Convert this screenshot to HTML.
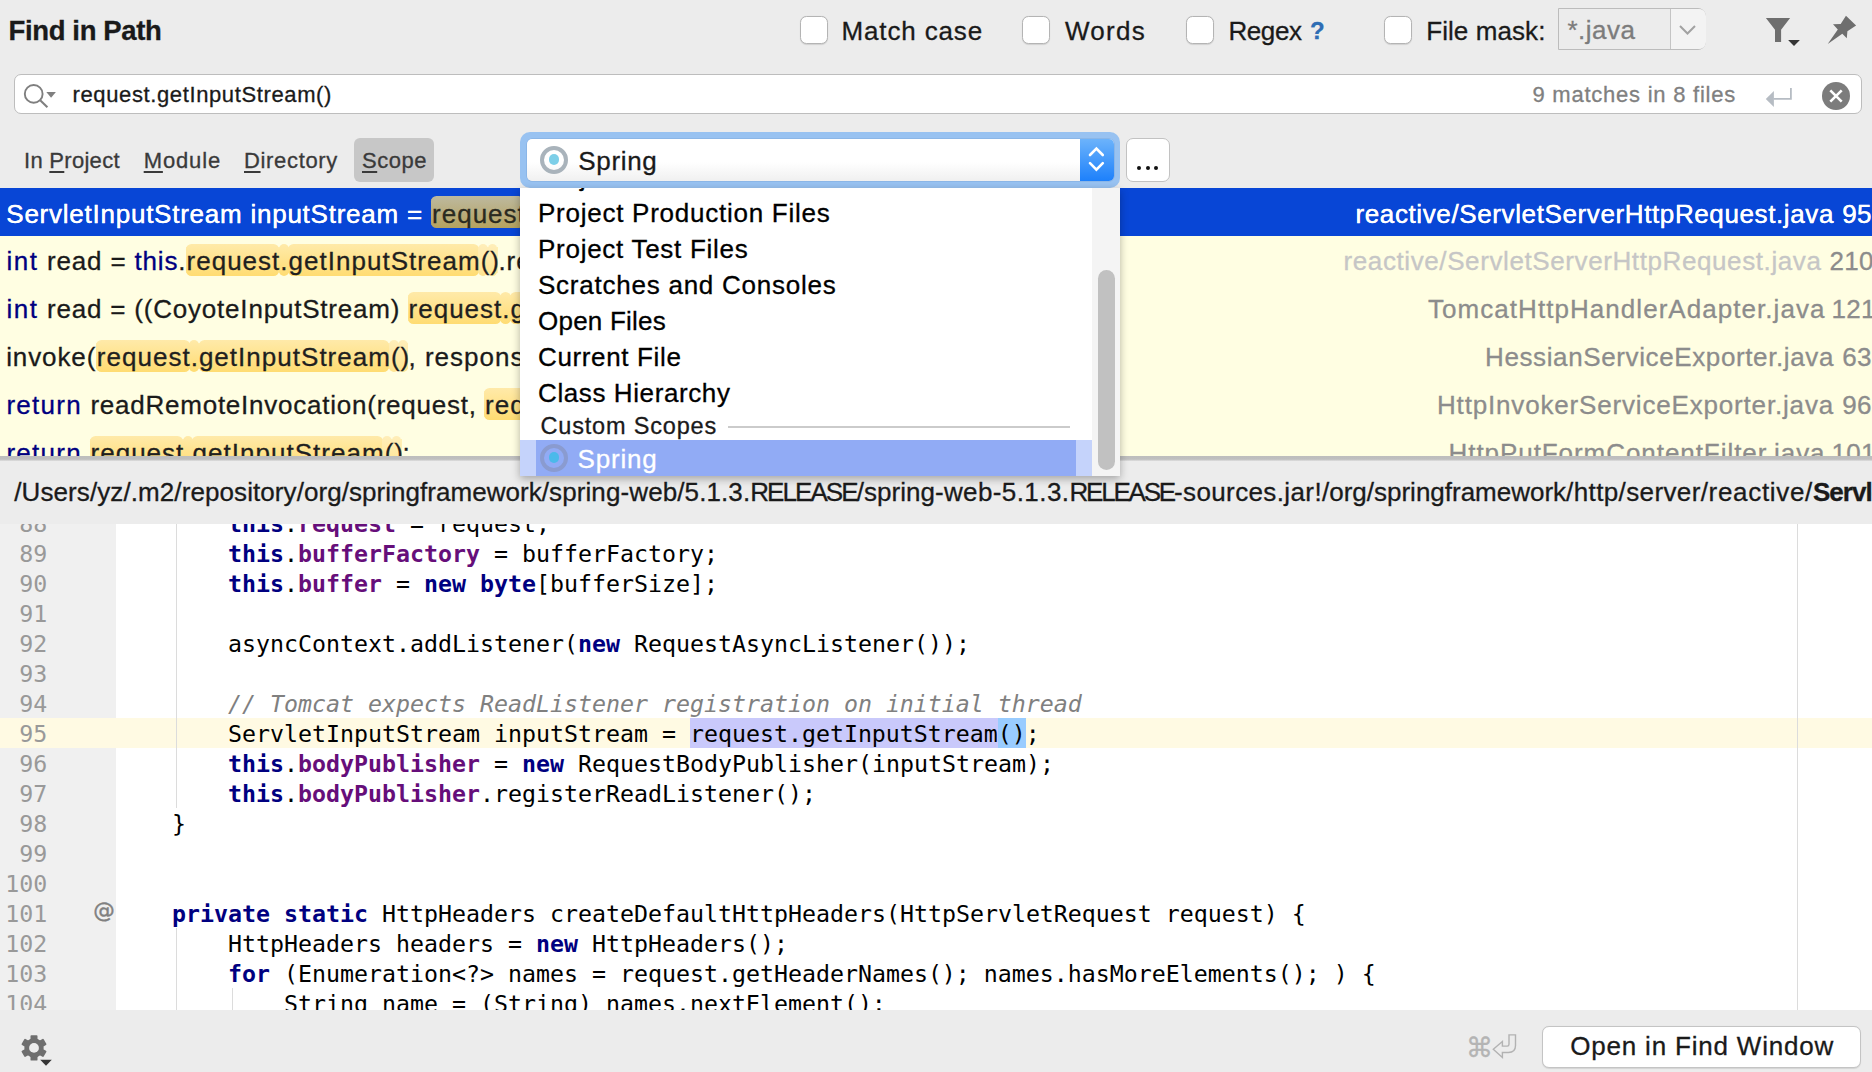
<!DOCTYPE html>
<html lang="en"><head><meta charset="utf-8"><title>Find in Path</title>
<style>
html,body{margin:0;padding:0}
body{width:1872px;height:1072px;background:#ececec;position:relative;overflow:hidden;font-family:"Liberation Sans",sans-serif;-webkit-font-smoothing:antialiased}
.t{position:absolute;white-space:pre;line-height:1;font-family:"Liberation Sans",sans-serif;-webkit-text-stroke:0.3px}
.t u{text-decoration:underline;text-decoration-thickness:1.6px;text-underline-offset:2.5px}
.abs{position:absolute}
.cb{position:absolute;width:26px;height:26px;border:1px solid #b4b4b4;border-radius:6.5px;background:#fff;box-shadow:0 0.5px 1px rgba(0,0,0,.12)}
.fm{position:absolute;left:1558px;top:7.5px;width:146px;height:40px;border:1px solid #bcbcbc;border-radius:0 8px 8px 0;background:#ececec}
.fmb{position:absolute;left:110.8px;top:0;width:35.2px;height:40px;border-left:1px solid #c4c4c4;background:#f3f3f3;border-radius:0 7px 7px 0}
.sf{position:absolute;left:14px;top:74px;width:1846px;height:38px;border:1px solid #bdbdbd;border-radius:7px;background:#fff}
.scopebtn{position:absolute;left:354px;top:138px;width:80px;height:44px;border-radius:6px;background:#c7c7c7}
.ring{position:absolute;left:520px;top:132px;width:600px;height:56px;border-radius:10px;background:#98c2f1;box-sizing:border-box}
.cbx{position:absolute;left:6.5px;top:6.5px;right:6px;height:42px;border-radius:5px;background:linear-gradient(#fff 55%,#f0f0f0);overflow:hidden;box-shadow:0 0 0 0.5px #7fa9dd}
.cbtn{position:absolute;right:0;top:0;width:34px;height:43px;background:linear-gradient(#6cb3fb,#1b7ffb)}
.cbtn svg{display:block}
.radio{position:absolute;width:28px;height:28px;border-radius:50%;box-sizing:border-box;border:4.4px solid #a9b3bb}
.radio i{position:absolute;left:4.7px;top:4.9px;width:10.2px;height:10.2px;border-radius:50%;background:#7dcfe8}
.radio.sel{border-color:#8a9bd0}
.radio.sel i{background:#4bb9ea}
.dots{position:absolute;left:1126px;top:138px;width:42px;height:42px;border:1px solid #c2c2c2;border-radius:7px;background:#fff}
.dots i{position:absolute;top:26.6px;width:4px;height:4px;border-radius:50%;background:#111}
.list{position:absolute;left:0;top:188px;width:1872px;height:268px;background:#fffee2;overflow:hidden}
.row{position:absolute;left:0;width:1872px;height:48px}
.row.sel{background:#0846d6}
.hl{position:absolute;border-radius:5.5px}
.clip6{position:absolute;left:0;top:428px;width:1872px;height:28px;overflow:hidden}
.listborder{position:absolute;left:0;top:456px;width:1872px;height:4.5px;background:linear-gradient(#bdbdbd 0,#bfbfbf 65%,#e0e0e0 100%)}
.popup{position:absolute;left:520px;top:188px;width:600px;height:288px;background:#fff;box-shadow:0 3px 8px rgba(0,0,0,.3)}
.psel{position:absolute;left:0;top:252px;width:572px;height:36px;background:#c5d3fb}
.pselin{position:absolute;left:16px;top:0;width:540px;height:36px;background:#91abf5}
.ptrack{position:absolute;left:572px;top:0;width:28px;height:288px;background:#f4f4f4}
.pthumb{position:absolute;left:6px;top:81.5px;width:16.5px;height:200px;border-radius:8.5px;background:#c1c1c1}
.psep{position:absolute;left:208px;top:238px;width:342px;height:1.6px;background:#cbcbcb}
.pclip{position:absolute;left:520px;top:188px;width:572px;height:288px;overflow:hidden}
.ed{position:absolute;left:0;top:524px;width:1872px;height:486px;background:#fff;overflow:hidden}
.gut{position:absolute;left:0;top:0;width:116px;height:488px;background:#f0f0f0}
.cur{position:absolute;left:0;top:194px;width:1872px;height:30px;background:#fffae3}
.margin{position:absolute;left:1796.5px;top:0;width:1.4px;height:488px;background:#dcdcdc}
.ig{position:absolute;width:1.3px;background:#dcdcdc}
.ln,.cl,.at{position:absolute;font-family:"DejaVu Sans Mono","Liberation Mono",monospace;font-size:23.254px;line-height:30px;height:30px;white-space:pre}
.ln{left:0;width:47.3px;text-align:right;color:#999}
.cl{left:116px;color:#000}
.at{left:93.3px;color:#808080;font-size:21.5px;font-family:'DejaVu Sans',sans-serif;-webkit-text-stroke:0.4px}
.k{color:#000080}
.f{color:#660e7a}
.c{color:#808080;font-weight:normal}
.esel{position:absolute;background:#c9c9fb;height:30px}
.br{position:absolute;background:#99ccff;height:30px}
.obtn{position:absolute;left:1542px;top:1026px;width:317.4px;height:40px;border:1px solid #c4c4c4;border-radius:7px;background:#fff;box-shadow:0 0.5px 1px rgba(0,0,0,.1)}
</style></head>
<body>
<span class="t" style="left:8.50px;top:17.32px;font-size:27.5px;color:#1a1a1a;font-weight:bold;letter-spacing:-0.363px;">Find in Path</span>
<div class="cb" style="left:800px;top:16px"></div>
<div class="cb" style="left:1022px;top:16px"></div>
<div class="cb" style="left:1186px;top:16px"></div>
<div class="cb" style="left:1384px;top:16px"></div>
<span class="t" style="left:841.50px;top:17.59px;font-size:26px;color:#1a1a1a;font-weight:normal;letter-spacing:0.855px;">Match case</span>
<span class="t" style="left:1065.00px;top:17.59px;font-size:26px;color:#1a1a1a;font-weight:normal;letter-spacing:1.269px;">Words</span>
<span class="t" style="left:1228.50px;top:17.59px;font-size:26px;color:#1a1a1a;font-weight:normal;letter-spacing:-0.431px;">Regex</span>
<span class="t" style="left:1310.00px;top:19.28px;font-size:24px;color:#2e6db4;font-weight:bold;letter-spacing:0.000px;">?</span>
<span class="t" style="left:1426.20px;top:17.59px;font-size:26px;color:#1a1a1a;font-weight:normal;letter-spacing:0.083px;">File mask:</span>
<div class="fm"><div class="fmb"></div></div>
<span class="t" style="left:1567.50px;top:17.09px;font-size:26px;color:#7c7c7c;font-weight:normal;letter-spacing:0.492px;">*.java</span>
<svg class="abs" style="left:1677px;top:22px" width="22" height="16" viewBox="0 0 22 16"><path d="M3 4 L10.5 11.5 L18 4" fill="none" stroke="#a2a2a2" stroke-width="2"/></svg>
<svg class="abs" style="left:1750px;top:0" width="122" height="60" viewBox="0 0 122 60"><path d="M15.90 18.10 L40.10 18.10 L31.10 29.70 L31.10 41.90 L25.00 41.90 L25.00 29.70 Z" fill="#6e6e6e"/><path d="M38.10 40.10 L49.90 40.10 L44.00 45.90 Z" fill="#353535"/><path d="M95.96 15.77 L106.10 25.50 L97.40 31.30 L96.80 38.30 L92.30 33.85 L77.70 44.10 L87.80 29.40 L83.00 24.20 L90.70 24.00 Z" fill="#6e6e6e"/></svg>
<div class="sf"></div>
<svg class="abs" style="left:20px;top:80px" width="40" height="30" viewBox="0 0 40 30"><circle cx="13.7" cy="13.9" r="8.9" fill="none" stroke="#7f7f7f" stroke-width="1.9"/><path d="M20.2 20.3 L27.4 27.2" stroke="#7f7f7f" stroke-width="2.1" fill="none"/><path d="M26.3 12 H35.9 L31.1 17.7 Z" fill="#7f7f7f"/></svg>
<span class="t" style="left:72.50px;top:83.98px;font-size:22px;color:#1a1a1a;font-weight:normal;letter-spacing:0.622px;">request.getInputStream()</span>
<span class="t" style="left:1532.50px;top:83.68px;font-size:22px;color:#808080;font-weight:normal;letter-spacing:0.759px;">9 matches in 8 files</span>
<svg class="abs" style="left:1762px;top:84px" width="36" height="28" viewBox="0 0 36 28"><path d="M28.9 4.1 V14.95 H11.5" fill="none" stroke="#b6bcc3" stroke-width="1.8"/><path d="M3.8 14.9 L11.9 6.9 V23.1 Z" fill="#b6bcc3"/></svg>
<svg class="abs" style="left:1821px;top:81px" width="30" height="30" viewBox="0 0 30 30"><circle cx="15" cy="15" r="14" fill="#7c7c7c"/><path d="M9.3 9.3 L20.7 20.7 M20.7 9.3 L9.3 20.7" stroke="#fff" stroke-width="2.6" fill="none"/></svg>
<div class="scopebtn"></div>
<span class="t" style="left:24.00px;top:149.98px;font-size:22px;color:#3a3a3a;font-weight:normal;letter-spacing:0.286px;">In <u>P</u>roject</span>
<span class="t" style="left:143.70px;top:149.98px;font-size:22px;color:#3a3a3a;font-weight:normal;letter-spacing:0.857px;"><u>M</u>odule</span>
<span class="t" style="left:244.00px;top:149.98px;font-size:22px;color:#3a3a3a;font-weight:normal;letter-spacing:0.665px;"><u>D</u>irectory</span>
<span class="t" style="left:362.00px;top:149.98px;font-size:22px;color:#3a3a3a;font-weight:normal;letter-spacing:0.522px;"><u>S</u>cope</span>
<div class="ring"><div class="cbx"><div class="cbtn"><svg width="34" height="43" viewBox="0 0 34 43"><path d="M10 16 L16.4 9.6 L22.8 16 M10 24.2 L16.4 30.6 L22.8 24.2" fill="none" stroke="#fff" stroke-width="2.6" stroke-linecap="round" stroke-linejoin="miter"/></svg></div></div></div>
<div class="radio" style="left:540px;top:145.5px"><i></i></div>
<span class="t" style="left:578.30px;top:148.39px;font-size:26px;color:#1a1a1a;font-weight:normal;letter-spacing:0.674px;">Spring</span>
<div class="dots"><i style="left:10.3px"></i><i style="left:18.5px"></i><i style="left:26.6px"></i></div>
<div class="list">
<div class="row sel" style="top:0"></div>
</div>
<div class="hl" style="left:430.5px;top:199px;width:313.5px;height:26px;background:rgba(180,170,120,.55);border-radius:0"></div><div class="hl" style="left:430.5px;top:196px;width:93.3px;height:32px;background:linear-gradient(#bdb99f,#b5a25e)"></div><div class="hl" style="left:523.2px;top:196px;width:10.3px;height:32px;background:linear-gradient(#bdb99f,#b5a25e)"></div><div class="hl" style="left:532.9px;top:196px;width:190.4px;height:32px;background:linear-gradient(#bdb99f,#b5a25e)"></div><div class="hl" style="left:722.7px;top:196px;width:10.0px;height:32px;background:linear-gradient(#bdb99f,#b5a25e)"></div><div class="hl" style="left:732.3px;top:196px;width:9.7px;height:32px;background:linear-gradient(#bdb99f,#b5a25e)"></div>
<span class="t" style="left:6.30px;top:200.79px;font-size:26px;color:#fff;font-weight:normal;letter-spacing:0.755px;text-shadow:0 0 0.6px #fff;">ServletInputStream inputStream = </span>
<span class="t" style="left:432.00px;top:200.79px;font-size:26px;color:#2a2a20;font-weight:normal;letter-spacing:1.019px;">request.getInputStream()</span>
<span class="t" style="left:1355.50px;top:200.79px;font-size:26px;color:#fff;font-weight:normal;letter-spacing:0.613px;text-shadow:0 0 0.6px #fff;">reactive/ServletServerHttpRequest.java</span>
<span class="t" style="left:1842.30px;top:200.79px;font-size:26px;color:#fff;font-weight:normal;letter-spacing:0.300px;text-shadow:0 0 0.6px #fff;">95</span>
<div class="hl" style="left:186px;top:247px;width:311.5px;height:25.5px;background:rgba(255,228,140,.55);border-radius:0"></div><div class="hl" style="left:186.0px;top:244px;width:93.3px;height:31.5px;background:linear-gradient(#ffeaa9,#ffdc72)"></div><div class="hl" style="left:278.7px;top:244px;width:10.3px;height:31.5px;background:linear-gradient(#ffeaa9,#ffdc72)"></div><div class="hl" style="left:288.4px;top:244px;width:190.4px;height:31.5px;background:linear-gradient(#ffeaa9,#ffdc72)"></div><div class="hl" style="left:478.2px;top:244px;width:10.0px;height:31.5px;background:linear-gradient(#ffeeba,#ffe490)"></div><div class="hl" style="left:487.8px;top:244px;width:9.7px;height:31.5px;background:linear-gradient(#ffeeba,#ffe490)"></div>
<span class="t" style="left:6.60px;top:247.99px;font-size:26px;color:#000080;font-weight:normal;letter-spacing:1.428px;">int </span>
<span class="t" style="left:47.00px;top:247.99px;font-size:26px;color:#1a1a1a;font-weight:normal;letter-spacing:0.828px;">read = <span style="color:#000080">this</span>.</span>
<span class="t" style="left:186.50px;top:247.99px;font-size:26px;color:#1f1f1f;font-weight:normal;letter-spacing:1.019px;">request.getInputStream()</span>
<span class="t" style="left:498.50px;top:247.99px;font-size:26px;color:#1a1a1a;font-weight:normal;letter-spacing:0.900px;">.read()</span>
<span class="t" style="left:1343.50px;top:247.99px;font-size:26px;color:#c6c6c6;font-weight:normal;letter-spacing:0.600px;">reactive/ServletServerHttpRequest.java</span>
<span class="t" style="left:1829.60px;top:247.99px;font-size:26px;color:#8c8c8c;font-weight:normal;letter-spacing:0.300px;">210</span>
<div class="hl" style="left:407.7px;top:295px;width:312.3px;height:25.5px;background:rgba(255,228,140,.55);border-radius:0"></div><div class="hl" style="left:407.7px;top:292px;width:93.3px;height:31.5px;background:linear-gradient(#ffeaa9,#ffdc72)"></div><div class="hl" style="left:500.4px;top:292px;width:10.3px;height:31.5px;background:linear-gradient(#ffeaa9,#ffdc72)"></div><div class="hl" style="left:510.1px;top:292px;width:190.4px;height:31.5px;background:linear-gradient(#ffeaa9,#ffdc72)"></div><div class="hl" style="left:699.9px;top:292px;width:10.0px;height:31.5px;background:linear-gradient(#ffeeba,#ffe490)"></div><div class="hl" style="left:709.5px;top:292px;width:9.7px;height:31.5px;background:linear-gradient(#ffeeba,#ffe490)"></div>
<span class="t" style="left:6.60px;top:295.99px;font-size:26px;color:#000080;font-weight:normal;letter-spacing:1.428px;">int </span>
<span class="t" style="left:47.00px;top:295.99px;font-size:26px;color:#1a1a1a;font-weight:normal;letter-spacing:0.800px;">read = ((CoyoteInputStream) </span>
<span class="t" style="left:408.50px;top:295.99px;font-size:26px;color:#1f1f1f;font-weight:normal;letter-spacing:1.019px;">request.getInputStream()</span>
<span class="t" style="left:1428.00px;top:295.99px;font-size:26px;color:#8c8c8c;font-weight:normal;letter-spacing:1.048px;">TomcatHttpHandlerAdapter.java</span>
<span class="t" style="left:1831.60px;top:295.99px;font-size:26px;color:#8c8c8c;font-weight:normal;letter-spacing:0.300px;">121</span>
<div class="hl" style="left:96.3px;top:343px;width:311.4px;height:25.5px;background:rgba(255,228,140,.55);border-radius:0"></div><div class="hl" style="left:96.3px;top:340px;width:93.3px;height:31.5px;background:linear-gradient(#ffeaa9,#ffdc72)"></div><div class="hl" style="left:189.0px;top:340px;width:10.3px;height:31.5px;background:linear-gradient(#ffeaa9,#ffdc72)"></div><div class="hl" style="left:198.7px;top:340px;width:190.4px;height:31.5px;background:linear-gradient(#ffeaa9,#ffdc72)"></div><div class="hl" style="left:388.5px;top:340px;width:10.0px;height:31.5px;background:linear-gradient(#ffeeba,#ffe490)"></div><div class="hl" style="left:398.1px;top:340px;width:9.7px;height:31.5px;background:linear-gradient(#ffeeba,#ffe490)"></div>
<span class="t" style="left:6.20px;top:343.99px;font-size:26px;color:#1a1a1a;font-weight:normal;letter-spacing:0.882px;">invoke(</span>
<span class="t" style="left:96.80px;top:343.99px;font-size:26px;color:#1f1f1f;font-weight:normal;letter-spacing:1.019px;">request.getInputStream()</span>
<span class="t" style="left:408.50px;top:343.99px;font-size:26px;color:#1a1a1a;font-weight:normal;letter-spacing:1.000px;">, response.getOutputStream());</span>
<span class="t" style="left:1485.00px;top:343.99px;font-size:26px;color:#8c8c8c;font-weight:normal;letter-spacing:0.615px;">HessianServiceExporter.java</span>
<span class="t" style="left:1842.30px;top:343.99px;font-size:26px;color:#8c8c8c;font-weight:normal;letter-spacing:0.300px;">63</span>
<div class="hl" style="left:484px;top:391px;width:312px;height:25.5px;background:rgba(255,228,140,.55);border-radius:0"></div><div class="hl" style="left:484.0px;top:388px;width:93.3px;height:31.5px;background:linear-gradient(#ffeaa9,#ffdc72)"></div><div class="hl" style="left:576.7px;top:388px;width:10.3px;height:31.5px;background:linear-gradient(#ffeaa9,#ffdc72)"></div><div class="hl" style="left:586.4px;top:388px;width:190.4px;height:31.5px;background:linear-gradient(#ffeaa9,#ffdc72)"></div><div class="hl" style="left:776.2px;top:388px;width:10.0px;height:31.5px;background:linear-gradient(#ffeeba,#ffe490)"></div><div class="hl" style="left:785.8px;top:388px;width:9.7px;height:31.5px;background:linear-gradient(#ffeeba,#ffe490)"></div>
<span class="t" style="left:6.40px;top:391.99px;font-size:26px;color:#000080;font-weight:normal;letter-spacing:1.263px;">return </span>
<span class="t" style="left:90.40px;top:391.99px;font-size:26px;color:#1a1a1a;font-weight:normal;letter-spacing:0.762px;">readRemoteInvocation(request, </span>
<span class="t" style="left:485.00px;top:391.99px;font-size:26px;color:#1f1f1f;font-weight:normal;letter-spacing:1.019px;">request.getInputStream()</span>
<span class="t" style="left:1437.00px;top:391.99px;font-size:26px;color:#8c8c8c;font-weight:normal;letter-spacing:0.826px;">HttpInvokerServiceExporter.java</span>
<span class="t" style="left:1842.30px;top:391.99px;font-size:26px;color:#8c8c8c;font-weight:normal;letter-spacing:0.300px;">96</span>
<div class="clip6">
<div class="hl" style="left:90px;top:11px;width:311.5px;height:25.5px;background:rgba(255,228,140,.55);border-radius:0"></div><div class="hl" style="left:90.0px;top:8px;width:93.3px;height:31.5px;background:linear-gradient(#ffeaa9,#ffdc72)"></div><div class="hl" style="left:182.7px;top:8px;width:10.3px;height:31.5px;background:linear-gradient(#ffeaa9,#ffdc72)"></div><div class="hl" style="left:192.4px;top:8px;width:190.4px;height:31.5px;background:linear-gradient(#ffeaa9,#ffdc72)"></div><div class="hl" style="left:382.2px;top:8px;width:10.0px;height:31.5px;background:linear-gradient(#ffeeba,#ffe490)"></div><div class="hl" style="left:391.8px;top:8px;width:9.7px;height:31.5px;background:linear-gradient(#ffeeba,#ffe490)"></div>
<span class="t" style="left:6.40px;top:11.99px;font-size:26px;color:#000080;font-weight:normal;letter-spacing:1.263px;">return </span>
<span class="t" style="left:90.50px;top:11.99px;font-size:26px;color:#1f1f1f;font-weight:normal;letter-spacing:1.019px;">request.getInputStream()</span>
<span class="t" style="left:402.50px;top:11.99px;font-size:26px;color:#1a1a1a;font-weight:normal;letter-spacing:0.000px;">;</span>
<span class="t" style="left:1448.50px;top:11.99px;font-size:26px;color:#8c8c8c;font-weight:normal;letter-spacing:0.941px;">HttpPutFormContentFilter.java</span>
<span class="t" style="left:1831.60px;top:11.99px;font-size:26px;color:#8c8c8c;font-weight:normal;letter-spacing:0.300px;">101</span>
</div>
<div class="listborder"></div>
<div class="popup">
<div class="psel"><div class="pselin"></div></div>
<div class="ptrack"><div class="pthumb"></div></div>
<div class="psep"></div>
</div>
<div class="pclip">
<span class="t" style="left:18.00px;top:-23.81px;font-size:26px;color:#000;font-weight:normal;letter-spacing:0.535px;">Project Files</span>
<span class="t" style="left:18.00px;top:12.19px;font-size:26px;color:#000;font-weight:normal;letter-spacing:0.747px;">Project Production Files</span>
<span class="t" style="left:18.00px;top:48.19px;font-size:26px;color:#000;font-weight:normal;letter-spacing:0.723px;">Project Test Files</span>
<span class="t" style="left:18.00px;top:84.19px;font-size:26px;color:#000;font-weight:normal;letter-spacing:0.758px;">Scratches and Consoles</span>
<span class="t" style="left:18.00px;top:120.19px;font-size:26px;color:#000;font-weight:normal;letter-spacing:0.227px;">Open Files</span>
<span class="t" style="left:18.00px;top:156.19px;font-size:26px;color:#000;font-weight:normal;letter-spacing:0.639px;">Current File</span>
<span class="t" style="left:18.00px;top:192.19px;font-size:26px;color:#000;font-weight:normal;letter-spacing:0.600px;">Class Hierarchy</span>
<span class="t" style="left:20.50px;top:226.71px;font-size:23.5px;color:#1a1a1a;font-weight:normal;letter-spacing:0.816px;">Custom Scopes</span>
<div class="radio sel" style="left:20px;top:255.5px"><i></i></div>
<span class="t" style="left:57.50px;top:258.09px;font-size:26px;color:#fff;font-weight:normal;letter-spacing:0.807px;">Spring</span>
</div>
<span class="t" style="left:14.30px;top:478.89px;font-size:26px;color:#1a1a1a;font-weight:normal;letter-spacing:0.088px;">/Users/yz/.m2/repository</span>
<span class="t" style="left:296.70px;top:478.89px;font-size:26px;color:#1a1a1a;font-weight:normal;letter-spacing:0.040px;">/org/springframework</span>
<span class="t" style="left:541.70px;top:478.89px;font-size:26px;color:#1a1a1a;font-weight:normal;letter-spacing:0.109px;">/spring-web</span>
<span class="t" style="left:677.30px;top:478.89px;font-size:26px;color:#1a1a1a;font-weight:normal;letter-spacing:0.088px;">/5.1.3.</span>
<span class="t" style="left:750.20px;top:478.89px;font-size:26px;color:#1a1a1a;font-weight:normal;letter-spacing:-1.922px;">RELEASE</span>
<span class="t" style="left:856.70px;top:478.89px;font-size:26px;color:#1a1a1a;font-weight:normal;letter-spacing:0.036px;">/spring</span>
<span class="t" style="left:935.00px;top:478.89px;font-size:26px;color:#1a1a1a;font-weight:normal;letter-spacing:0.335px;">-web</span>
<span class="t" style="left:992.70px;top:478.89px;font-size:26px;color:#1a1a1a;font-weight:normal;letter-spacing:0.440px;">-5.1.3.</span>
<span class="t" style="left:1069.50px;top:478.89px;font-size:26px;color:#1a1a1a;font-weight:normal;letter-spacing:-2.208px;">RELEASE</span>
<span class="t" style="left:1174.00px;top:478.89px;font-size:26px;color:#1a1a1a;font-weight:normal;letter-spacing:0.381px;">-sources.jar!</span>
<span class="t" style="left:1322.00px;top:478.89px;font-size:26px;color:#1a1a1a;font-weight:normal;letter-spacing:-0.005px;">/org/springframework</span>
<span class="t" style="left:1566.10px;top:478.89px;font-size:26px;color:#1a1a1a;font-weight:normal;letter-spacing:0.378px;">/http/server</span>
<span class="t" style="left:1700.70px;top:478.89px;font-size:26px;color:#1a1a1a;font-weight:normal;letter-spacing:0.680px;">/reactive/</span>
<span class="t" style="left:1813.00px;top:478.89px;font-size:26px;color:#1a1a1a;font-weight:bold;letter-spacing:-1.000px;">ServletServerHttpRequest.java</span>
<div class="ed">
<div class="gut"></div>
<div class="cur"></div>
<div class="margin"></div>
<div class="esel" style="left:690px;top:194px;width:308px"></div><div class="br" style="left:998px;top:194px;width:28px"></div>
<div class="ig" style="left:176px;top:0;height:284px"></div>
<div class="ig" style="left:176px;top:404px;height:90px"></div>
<div class="ig" style="left:232px;top:464px;height:30px"></div>
<div class="ln" style="top:-15.4px">88</div>
<div class="cl" style="top:-15.4px">        <b class="k">this</b>.<b class="f">request</b> = request;</div>
<div class="ln" style="top:14.6px">89</div>
<div class="cl" style="top:14.6px">        <b class="k">this</b>.<b class="f">bufferFactory</b> = bufferFactory;</div>
<div class="ln" style="top:44.6px">90</div>
<div class="cl" style="top:44.6px">        <b class="k">this</b>.<b class="f">buffer</b> = <b class="k">new</b> <b class="k">byte</b>[bufferSize];</div>
<div class="ln" style="top:74.6px">91</div>
<div class="ln" style="top:104.6px">92</div>
<div class="cl" style="top:104.6px">        asyncContext.addListener(<b class="k">new</b> RequestAsyncListener());</div>
<div class="ln" style="top:134.6px">93</div>
<div class="ln" style="top:164.6px">94</div>
<div class="cl" style="top:164.6px">        <i class="c">// Tomcat expects ReadListener registration on initial thread</i></div>
<div class="ln" style="top:194.6px">95</div>
<div class="cl" style="top:194.6px">        ServletInputStream inputStream = request.getInputStream();</div>
<div class="ln" style="top:224.6px">96</div>
<div class="cl" style="top:224.6px">        <b class="k">this</b>.<b class="f">bodyPublisher</b> = <b class="k">new</b> RequestBodyPublisher(inputStream);</div>
<div class="ln" style="top:254.6px">97</div>
<div class="cl" style="top:254.6px">        <b class="k">this</b>.<b class="f">bodyPublisher</b>.registerReadListener();</div>
<div class="ln" style="top:284.6px">98</div>
<div class="cl" style="top:284.6px">    }</div>
<div class="ln" style="top:314.6px">99</div>
<div class="ln" style="top:344.6px">100</div>
<div class="ln" style="top:374.6px">101</div>
<div class="cl" style="top:374.6px">    <b class="k">private</b> <b class="k">static</b> HttpHeaders createDefaultHttpHeaders(HttpServletRequest request) {</div>
<div class="ln" style="top:404.6px">102</div>
<div class="cl" style="top:404.6px">        HttpHeaders headers = <b class="k">new</b> HttpHeaders();</div>
<div class="ln" style="top:434.6px">103</div>
<div class="cl" style="top:434.6px">        <b class="k">for</b> (Enumeration&lt;?&gt; names = request.getHeaderNames(); names.hasMoreElements(); ) {</div>
<div class="ln" style="top:464.6px">104</div>
<div class="cl" style="top:464.6px">            String name = (String) names.nextElement();</div>
<div class="at" style="top:371.8px">@</div>
</div>
<svg class="abs" style="left:14px;top:1028px" width="44" height="44" viewBox="0 0 44 44"><g transform="translate(20 19.9)" fill="#6e6e6e"><rect x="-3.5" y="-12.7" width="7" height="7" rx="0.9" transform="rotate(0)"/><rect x="-3.5" y="-12.7" width="7" height="7" rx="0.9" transform="rotate(60)"/><rect x="-3.5" y="-12.7" width="7" height="7" rx="0.9" transform="rotate(120)"/><rect x="-3.5" y="-12.7" width="7" height="7" rx="0.9" transform="rotate(180)"/><rect x="-3.5" y="-12.7" width="7" height="7" rx="0.9" transform="rotate(240)"/><rect x="-3.5" y="-12.7" width="7" height="7" rx="0.9" transform="rotate(300)"/><circle r="9.7"/></g><circle cx="20" cy="19.9" r="4.9" fill="#ececec"/><path d="M26.2 31.8 H37.8 L32 37.7 Z" fill="#353535"/></svg>
<span class="t" style="left:1466.00px;top:1034.24px;font-size:27px;color:#b4b4b4;font-weight:normal;letter-spacing:0.000px;font-family:'DejaVu Sans',sans-serif;">⌘</span>
<svg class="abs" style="left:1485px;top:1025px" width="40" height="40" viewBox="0 0 40 40"><path d="M8.3 24.3 L17.4 16.5 V21.1 H22.3 Q24 21.1 24 19.3 V9.9 H30.5 V20.6 Q30.5 27.5 23.4 27.5 H17.4 V32.5 Z" fill="none" stroke="#b2b2b2" stroke-width="1.4" stroke-linejoin="miter"/></svg>
<div class="obtn"></div>
<span class="t" style="left:1570.20px;top:1033.39px;font-size:26px;color:#1a1a1a;font-weight:normal;letter-spacing:0.812px;">Open in Find Window</span>
</body></html>
